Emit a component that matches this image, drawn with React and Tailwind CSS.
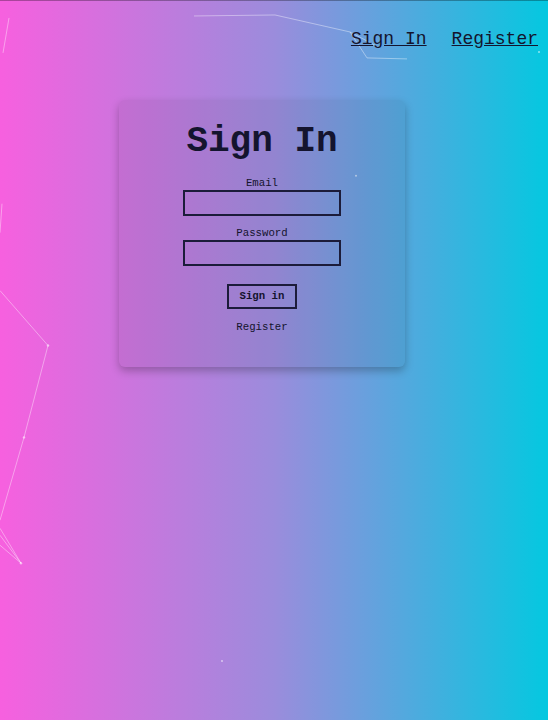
import React from 'react'

const font = { fontFamily: '"Liberation Mono", "Courier New", monospace' }

function Particles() {
  return (
    <svg className="absolute inset-0 h-full w-full pointer-events-none" viewBox="0 0 548 720" preserveAspectRatio="none">
      <g stroke="rgba(255,255,255,0.4)" strokeWidth="1" fill="none">
        <path d="M194 15 L275 14 L350 31 L367 57 L407 58" />
        <path d="M350 31 L380 47" />
        <path d="M9 17 L3 52" />
        <path d="M2 203 L0 232" />
        <path d="M0 290 L48 345 L24 437 L0 520" />
        <path d="M0 528 L21 563 M0 545 L21 563 M21 563 L0 535" />
      </g>
      <g fill="rgba(255,255,255,0.55)">
        <circle cx="48" cy="345" r="1.2" />
        <circle cx="24" cy="437" r="1.2" />
        <circle cx="21" cy="563" r="1.2" />
        <circle cx="356" cy="175" r="1" />
        <circle cx="539" cy="51" r="1" />
        <circle cx="222" cy="661" r="1" />
      </g>
    </svg>
  )
}

export default function App() {
  return (
    <div className="relative min-h-[720px] w-full overflow-hidden border-t border-black/30 bg-linear-to-r/srgb from-[#f760df] via-[#9b8cdc] to-[#04c8e0] text-[#14142e]" style={font}>
      <Particles />
      <nav className="relative flex justify-end gap-[25px] pr-[10px] pt-[27px] text-[18px] leading-[22px]">
        <a href="#" className="underline">Sign In</a>
        <a href="#" className="underline">Register</a>
      </nav>
      <div className="relative ml-[119px] mt-[50px] flex h-[267px] w-[286px] flex-col items-center rounded-md bg-black/5 shadow-[0_4px_8px_rgba(0,0,0,0.25)]">
        <h1 className="mt-[22px] text-[36px] font-bold leading-[40px]">Sign In</h1>
        <label className="mt-[15px] text-[10.7px] leading-[13px]">Email</label>
        <input className="h-[26px] w-[158px] border-2 border-[#1c1c3a] bg-transparent" />
        <label className="mt-[11px] text-[10.7px] leading-[13px]">Password</label>
        <input type="password" className="h-[26px] w-[158px] border-2 border-[#1c1c3a] bg-transparent" />
        <button className="mt-[18px] h-[25px] w-[70px] border-2 border-[#1c1c3a] text-[10.7px] font-bold">Sign in</button>
        <a href="#" className="mt-[12px] text-[10.7px] leading-[13px]">Register</a>
      </div>
    </div>
  )
}
